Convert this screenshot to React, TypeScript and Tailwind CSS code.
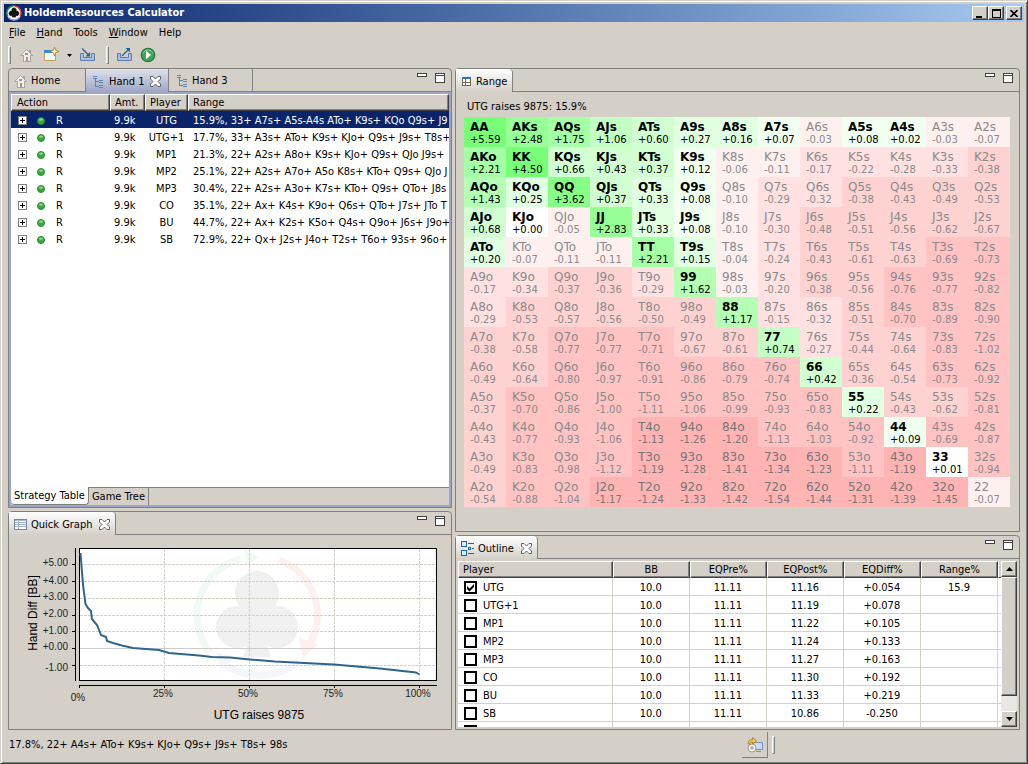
import { useState, type FC, type ReactNode } from 'react';
import clsx from 'clsx';

const RANKS = 'AKQJT98765432';

// Hand diffs in BB, row by row (suited above the diagonal, offsuit below).
const DIFFS: number[][] = [
  [5.59, 2.48, 1.75, 1.06, 0.6, 0.27, 0.16, 0.07, -0.03, 0.08, 0.02, -0.03, -0.07],
  [2.21, 4.5, 0.66, 0.43, 0.37, 0.12, -0.06, -0.11, -0.17, -0.22, -0.28, -0.33, -0.38],
  [1.43, 0.25, 3.62, 0.37, 0.33, 0.08, -0.1, -0.29, -0.32, -0.38, -0.43, -0.49, -0.53],
  [0.68, 0, -0.05, 2.83, 0.33, 0.08, -0.1, -0.3, -0.48, -0.51, -0.56, -0.62, -0.67],
  [0.2, -0.07, -0.11, -0.11, 2.21, 0.15, -0.04, -0.24, -0.43, -0.61, -0.63, -0.69, -0.73],
  [-0.17, -0.34, -0.37, -0.36, -0.29, 1.62, -0.03, -0.2, -0.38, -0.56, -0.76, -0.77, -0.82],
  [-0.29, -0.53, -0.57, -0.56, -0.5, -0.49, 1.17, -0.15, -0.32, -0.51, -0.7, -0.89, -0.9],
  [-0.38, -0.58, -0.77, -0.77, -0.71, -0.67, -0.61, 0.74, -0.27, -0.44, -0.64, -0.83, -1.02],
  [-0.49, -0.64, -0.8, -0.97, -0.91, -0.86, -0.79, -0.74, 0.42, -0.36, -0.54, -0.73, -0.92],
  [-0.37, -0.7, -0.86, -1.0, -1.11, -1.06, -0.99, -0.93, -0.83, 0.22, -0.43, -0.62, -0.81],
  [-0.43, -0.77, -0.93, -1.06, -1.134, -1.26, -1.2, -1.13, -1.03, -0.92, 0.09, -0.69, -0.87],
  [-0.49, -0.83, -0.98, -1.12, -1.19, -1.28, -1.41, -1.34, -1.23, -1.11, -1.19, 0.01, -0.94],
  [-0.54, -0.88, -1.04, -1.17, -1.24, -1.33, -1.42, -1.54, -1.44, -1.31, -1.39, -1.45, -0.07],
];

const LEVELS = [0.015, 0.14, 0.35, 0.685, 1.132, 1.7, 2.3, 3.2, 4.2];
const GREENS = [
  'bg-white',
  'bg-[#f0fff0]',
  'bg-[#e1ffe1]',
  'bg-[#d2ffd2]',
  'bg-[#c3ffc3]',
  'bg-[#b4ffb4]',
  'bg-[#a5ffa5]',
  'bg-[#96ff96]',
  'bg-[#87ff87]',
  'bg-[#78ff78]',
];
const REDS = ['bg-white', 'bg-[#fff0f0]', 'bg-[#ffe1e1]', 'bg-[#ffd2d2]', 'bg-[#ffc3c3]', 'bg-[#ffb4b4]'];

const level = (v: number) => LEVELS.filter((l) => Math.abs(v) >= l).length;

const handName = (r: number, c: number) => {
  if (r === c) return RANKS[r] + RANKS[r];
  return r < c ? `${RANKS[r]}${RANKS[c]}s` : `${RANKS[c]}${RANKS[r]}o`;
};

const STRATEGY = [
  ['UTG', '15.9%, 33+ A7s+ A5s-A4s ATo+ K9s+ KQo Q9s+ J9'],
  ['UTG+1', '17.7%, 33+ A3s+ ATo+ K9s+ KJo+ Q9s+ J9s+ T8s+'],
  ['MP1', '21.3%, 22+ A2s+ A8o+ K9s+ KJo+ Q9s+ QJo J9s+'],
  ['MP2', '25.1%, 22+ A2s+ A7o+ A5o K8s+ KTo+ Q9s+ QJo J'],
  ['MP3', '30.4%, 22+ A2s+ A3o+ K7s+ KTo+ Q9s+ QTo+ J8s'],
  ['CO', '35.1%, 22+ Ax+ K4s+ K9o+ Q6s+ QTo+ J7s+ JTo T'],
  ['BU', '44.7%, 22+ Ax+ K2s+ K5o+ Q4s+ Q9o+ J6s+ J9o+'],
  ['SB', '72.9%, 22+ Qx+ J2s+ J4o+ T2s+ T6o+ 93s+ 96o+'],
];

const OUTLINE = [
  ['UTG', '10.0', '11.11', '11.16', '+0.054', '15.9'],
  ['UTG+1', '10.0', '11.11', '11.19', '+0.078', ''],
  ['MP1', '10.0', '11.11', '11.22', '+0.105', ''],
  ['MP2', '10.0', '11.11', '11.24', '+0.133', ''],
  ['MP3', '10.0', '11.11', '11.27', '+0.163', ''],
  ['CO', '10.0', '11.11', '11.30', '+0.192', ''],
  ['BU', '10.0', '11.11', '11.33', '+0.219', ''],
  ['SB', '10.0', '11.11', '10.86', '-0.250', ''],
  ['', '', '', '', '', ''],
];

const RAISED =
  'border border-white border-r-[#404040] border-b-[#404040] bg-[#d4d0c8] shadow-[inset_-1px_-1px_0_#808080]';
const HEAD_CELL =
  'border-l border-t border-b border-r border-l-white border-t-white border-b-[#404040] border-r-[#404040] bg-[#d4d0c8] p-0 pt-px font-normal shadow-[inset_-1px_-1px_0_#808080]';

/* ---------- icons ---------- */

const CLUB = 'M8 3a2.2 2.2 0 0 1 1.9 3.3A2.3 2.3 0 1 1 8.7 9.6L9.6 12H6.4l.9-2.4A2.3 2.3 0 1 1 6.1 6.3 2.2 2.2 0 0 1 8 3z';

const AppIcon = () => (
  <svg width="16" height="16" viewBox="0 0 16 16">
    <circle cx="8" cy="8" r="7.3" fill="#fff" />
    <path d="M2 11.5A7 7 0 0 1 7.5 1" fill="none" stroke="#1d9a55" strokeWidth="1.4" />
    <path d="M8.5 1A7 7 0 0 1 14 11.5" fill="none" stroke="#e03030" strokeWidth="1.4" />
    <path d="M2.5 12.5a7 7 0 0 0 11 0" fill="none" stroke="#8c9be0" strokeWidth="1.4" />
    <path d={CLUB} fill="#111" stroke="#111" strokeWidth=".8" />
  </svg>
);

const HomeIcon = () => (
  <svg width="16" height="16" viewBox="0 0 16 16" shapeRendering="crispEdges">
    <path d="M2 8l5.500-5.500L13 8h-2v6H4V8z" fill="#efeeeb" stroke="#aaa7a0" />
    <path d="M10 3h1.500v3L10 4.500z" fill="#aaa7a0" />
    <path d="M6 6h3v2H6zM6.500 10h2v4h-2z" fill="#99958f" />
  </svg>
);

const NewWindowIcon = () => (
  <svg width="16" height="16" viewBox="0 0 16 16">
    <path d="M1.500 3.500h11v10h-11z" fill="#eef6ff" stroke="#c0a050" />
    <path d="M1 3h9v3H1z" fill="#3b86d8" />
    <path d="M11.500 0l1.300 3.200L16 4.500l-3.200 1.300L11.500 9l-1.300-3.200L7 4.500l3.200-1.300z" fill="#f3cf52" stroke="#a8821c" strokeWidth=".7" />
    <path d="M11.500 2.500v4M9.500 4.500h4" stroke="#fff8d8" />
  </svg>
);

const TrayIcon: FC<{ out?: boolean }> = ({ out }) => (
  <svg width="17" height="16" viewBox="0 0 17 16">
    <path d="M1.500 6.500v7h14v-7h-3v4h-8v-4z" fill="#a9bfe0" stroke="#5c7eb5" />
    {out ? (
      <g stroke="#1f6391" fill="#1f6391">
        <path d="M6 9l6-6" strokeWidth="1.200" />
        <path d="M14 1v4.500L9.500 1z" stroke="none" />
      </g>
    ) : (
      <g stroke="#1f6391" fill="#1f6391">
        <path d="M3 1.500l6 6" strokeWidth="1.200" />
        <path d="M11 9.500V5L6.500 9.500z" stroke="none" />
      </g>
    )}
  </svg>
);

const RunIcon = () => (
  <svg width="16" height="16" viewBox="0 0 16 16">
    <circle cx="8" cy="8" r="6.700" fill="#3fa558" stroke="#1e7d3c" strokeWidth="1.200" />
    <path d="M3 6a5.500 5.500 0 0 1 10 0" fill="none" stroke="#8fd19b" />
    <path d="M6 3.800L11 8l-5 4.200z" fill="#fff" />
  </svg>
);

const TreeIcon = () => (
  <svg width="11" height="14" viewBox="0 0 11 14" shapeRendering="crispEdges" fill="none" stroke="#5f86b8">
    <path d="M0 1.500h4M0 3.500h4M2.500 4v8M3 6.500h3M3 11.500h3" />
    <path d="M6 5.500h4M6 7.500h4M6 10.500h4M6 12.500h4" />
  </svg>
);

const CloseIcon = () => (
  <svg width="11" height="11" viewBox="0 0 11 11">
    <path
      d="M.5.500h2.500L5.500 3 8 .500h2.500V3L8 5.500 10.500 8v2.500H8L5.500 8 3 10.500H.500V8L3 5.500.500 3z"
      fill="#fff"
      stroke="#505050"
      strokeWidth=".9"
    />
  </svg>
);

const TableIcon = () => (
  <svg width="13" height="11" viewBox="0 0 13 11" shapeRendering="crispEdges">
    <path d="M.5.500h12v10H.5z" fill="#fff" stroke="#7487a8" />
    <path d="M1 1h11v1H1z" fill="#a9bde0" />
    <path d="M1 3.500h11M1 5.500h11M1 7.500h11M4.500 2v8" stroke="#a0b0c8" />
  </svg>
);

const RangeIcon = () => (
  <svg width="11" height="9" viewBox="0 0 11 9" shapeRendering="crispEdges">
    <path d="M1.500.500h8v8h-8z" fill="#fff" stroke="#6a6a4e" />
    <path d="M1 0h9v2H1z" fill="#2c73b8" />
    <path d="M4.500 2v6M2 5.500h7" stroke="#6a6a4e" />
  </svg>
);

const OutlineIcon = () => (
  <svg width="13" height="15" viewBox="0 0 13 15" shapeRendering="crispEdges" fill="#d8eefc" stroke="#1a67a8">
    <path d="M.5.500h5v5h-5zM.5 9.500h5v5h-5z" />
    <path d="M7.500 6.500h2v2h-2z" />
    <path d="M7 2.500h6M7 12.500h6M11 7.500h2" />
  </svg>
);

const SyncIcon = () => (
  <svg width="16" height="16" viewBox="0 0 16 16">
    <path d="M6.500 5.500h9v7h-9z" fill="#c9dbf5" stroke="#7490c0" />
    <path d="M9 14.500h5" stroke="#7490c0" />
    <circle cx="5" cy="11" r="4" fill="#f4f4ec" stroke="#a89a70" />
    <circle cx="5" cy="11" r="1.200" fill="#fff" stroke="#7490c0" />
    <path d="M1 7c0-3 1.500-4.500 4.500-4.500V.500L9.500 4 5.500 7V5C3.500 5 3 5.500 3 7z" fill="#f6c648" stroke="#a8761c" strokeWidth=".8" />
  </svg>
);

const MinMax = () => (
  <div className="ml-auto flex items-start gap-2 pt-1 pr-[6px]">
    <button type="button" aria-label="Minimize view" className="flex">
      <svg width="10" height="10" viewBox="0 0 10 10" shapeRendering="crispEdges">
        <path d="M.5.500h9v3h-9z" fill="#fff" stroke="#404040" />
      </svg>
    </button>
    <button type="button" aria-label="Maximize view" className="flex">
      <svg width="10" height="10" viewBox="0 0 10 10" shapeRendering="crispEdges">
        <path d="M.5.500h9v9h-9zM.5 2.500h9" fill="#fff" stroke="#404040" />
      </svg>
    </button>
  </div>
);

/* ---------- building blocks ---------- */

const ViewTab: FC<{ icon: ReactNode; title: string; closable?: boolean }> = ({ icon, title, closable }) => (
  <div className="-mb-px flex items-center gap-1 rounded-tr-sm border-r border-[#808080] bg-linear-to-b from-white to-[#d4d0c8] pt-[2px] pr-[5px] pl-[5px] whitespace-nowrap">
    {icon}
    <span>{title}</span>
    {closable && (
      <button type="button" aria-label={`Close ${title}`} className="ml-[3px]">
        <CloseIcon />
      </button>
    )}
  </div>
);

const Grip = () => <span className="h-[18px] w-[3px] border border-white border-r-[#808080] border-b-[#808080]" />;

const StrategyTable = () => {
  const [selected, setSelected] = useState(0);

  return (
    <div className="min-h-0 flex-1 overflow-hidden bg-white">
      <table className="w-full table-fixed border-separate border-spacing-0">
        <colgroup>
          <col className="w-[99px]" />
          <col className="w-[35px]" />
          <col className="w-[43px]" />
          <col />
        </colgroup>
        <thead>
          <tr className="h-[17px] text-left">
            <th className={clsx(HEAD_CELL, 'pl-[5px]')}>Action</th>
            <th className={clsx(HEAD_CELL, 'pl-1')}>Amt.</th>
            <th className={clsx(HEAD_CELL, 'pl-1')}>Player</th>
            <th className={clsx(HEAD_CELL, 'pl-1')}>Range</th>
          </tr>
        </thead>
        <tbody>
          {STRATEGY.map(([player, range], i) => (
            <tr
              key={player}
              onClick={() => setSelected(i)}
              className={clsx('h-[17px] whitespace-nowrap', i === selected && 'bg-[#0a246a] text-white')}
            >
              <td className="p-0 pt-[2px]">
                <div className="flex items-center pl-[7px]">
                  <button type="button" aria-label={`Expand ${player}`}>
                    <svg width="9" height="9" viewBox="0 0 9 9" shapeRendering="crispEdges">
                      <path d="M.5.500h8v8h-8z" fill="#fff" stroke="#808080" />
                      <path d="M2 4.500h5M4.500 2v5" stroke="#000" />
                    </svg>
                  </button>
                  <svg width="8" height="8" viewBox="0 0 8 8" className="ml-[10px]">
                    <circle cx="4" cy="4" r="3.500" fill="#37ab3c" stroke="#2a8a34" />
                    <ellipse cx="4" cy="2.600" rx="2" ry="1.200" fill="#8bdc84" />
                  </svg>
                  <span className="ml-[11px]">R</span>
                </div>
              </td>
              <td className="p-0 pt-[2px] pl-1">9.9k</td>
              <td className="p-0 pt-[2px] text-center">{player}</td>
              <td className="overflow-hidden p-0 pt-[2px] pl-[5px]">{range}</td>
            </tr>
          ))}
        </tbody>
      </table>
    </div>
  );
};

// label, grid line y, text baseline y
const Y_TICKS = [
  ['+5.00', 29, 31],
  ['+4.00', 46, 49],
  ['+3.00', 63, 65],
  ['+2.00', 80, 82],
  ['+1.00', 96, 99],
  ['+0.00', 113, 115],
  ['-1.00', 130, 136],
] as const;
const X_TICKS = [
  ['0%', 70],
  ['25%', 155],
  ['50%', 240],
  ['75%', 325],
  ['100%', 410],
] as const;

const QuickGraph = () => (
  <svg viewBox="0 0 442 194" className="h-[194px] w-full font-['Liberation_Sans',sans-serif]">
    <rect x="70.500" y="13.500" width="357" height="132" fill="#fff" stroke="#000" />

    {/* faded logo behind the curve */}
    <g fill="none" strokeWidth="7">
      <path d="M201 117A58 58 0 0 1 232 24" stroke="#f1f9f4" />
      <path d="M270 25A59 59 0 0 1 302 107" stroke="#fdf0ee" />
      <path d="M211 126A62 62 0 0 0 290 126" stroke="#f5f6fc" />
    </g>
    <path d="M235 14l16 8-14 9z" fill="#f1f9f4" />
    <path d="M290 103l19 6-15 14z" fill="#fdf0ee" />
    <path d="M207 117l18 6-14 12z" fill="#f5f6fc" />
    <g fill="#f0f0f0">
      <circle cx="248" cy="58" r="22" />
      <circle cx="228" cy="92" r="21" />
      <circle cx="268" cy="92" r="21" />
      <path d="M243 75h10v20l9 27h-28l9-27z" />
    </g>

    {Y_TICKS.map(([label, y, base]) => (
      <g key={label}>
        <path
          d={`M71 ${y + 0.5}H427`}
          stroke={label === '+0.00' ? '#ccc' : '#d4d0c8'}
          strokeDasharray={label === '+0.00' ? undefined : '3 1'}
        />
        <path d={`M63 ${y + 0.5}h3`} stroke="#000" />
        <text x="59" y={base} textAnchor="end" fontSize="10" fill="#222">
          {label}
        </text>
      </g>
    ))}
    {X_TICKS.map(([label, x], i) => (
      <g key={label}>
        {i > 0 && <path d={`M${x + 0.5} 14V145`} stroke="#d4d0c8" strokeDasharray="3 1" />}
        <path d={`M${x + 0.5} 150v3`} stroke="#000" />
        <text x={x - 1} y={i === 0 ? 166 : 162} textAnchor="middle" fontSize="10" fill="#222">
          {label}
        </text>
      </g>
    ))}
    <path d="M66.500 13v133M70 150.500h358" stroke="#000" />

    <path
      d="M71.500 18 74 50 76.500 69 79 73 82 76 83 84 88 90 92 100 97 102 98 106 104 108 113 110.500 124 113 150 115 160 118 190 120.500 203 122 221 122.500 241 124.500 266 126.500 325 129.500 371 133.500 407 137.500 410.500 139.500"
      fill="none"
      stroke="#2f6690"
      strokeWidth="2"
    />

    <text x="250" y="184" textAnchor="middle" fontSize="12">
      UTG raises 9875
    </text>
    <text transform="translate(28 78) rotate(-90)" textAnchor="middle" fontSize="12">
      Hand Diff [BB]
    </text>
  </svg>
);

const RangeMatrix = () => (
  <table className="w-full table-fixed border-collapse font-['DejaVu_Sans',sans-serif]">
    <tbody>
      {DIFFS.map((row, r) => (
        <tr key={RANKS[r]} className="h-[30px]">
          {row.map((v, c) => {
            const n = level(v);
            return (
              <td
                key={RANKS[c]}
                className={clsx(
                  'p-0 pt-[2px] pl-[6px]',
                  v < 0 ? REDS[Math.min(n, 5)] : GREENS[n],
                  v >= 0 ? 'text-black' : n >= 5 ? 'text-[#767676]' : 'text-[#8a8a8a]',
                )}
              >
                <div className={clsx('text-[12px] leading-[14px]', v >= 0 && 'font-bold')}>{handName(r, c)}</div>
                <div className="text-[10px] leading-[12px]">
                  {v < 0 ? '' : '+'}
                  {v.toFixed(2)}
                </div>
              </td>
            );
          })}
        </tr>
      ))}
    </tbody>
  </table>
);

const OutlineTable = () => {
  const [checked, setChecked] = useState(0);

  return (
    <div className="flex min-h-0 flex-1 overflow-hidden bg-white">
      <div className="min-h-0 flex-1 overflow-hidden">
        <table className="w-full table-fixed border-separate border-spacing-0">
          <colgroup>
            <col className="w-[28.5%]" />
            <col />
            <col />
            <col />
            <col />
            <col />
            <col className="w-[3px]" />
          </colgroup>
          <thead>
            <tr className="h-[17px]">
              <th className={clsx(HEAD_CELL, 'pl-1 text-left')}>Player</th>
              {['BB', 'EQPre%', 'EQPost%', 'EQDiff%', 'Range%'].map((h) => (
                <th key={h} className={HEAD_CELL}>
                  {h}
                </th>
              ))}
              <td className="border-b border-l border-b-[#404040] border-l-white bg-[#d4d0c8] p-0" />
            </tr>
          </thead>
          <tbody>
            {OUTLINE.map((row, i) => (
              <tr key={i} className="h-[18px]">
                {row.map((cell, c) => (
                  <td
                    key={c}
                    className={clsx(
                      'border-r border-b border-[#d4d0c8] p-0 pt-[2px]',
                      c > 0 ? 'text-center' : 'pl-[6px]',
                    )}
                  >
                    {c > 0 ? (
                      cell
                    ) : (
                      <label className="flex items-center gap-[6px]">
                        <span className="grid">
                          <input
                            type="checkbox"
                            aria-label={cell || 'Player'}
                            checked={i === checked}
                            onChange={() => setChecked(i)}
                            className="col-start-1 row-start-1 h-[13px] w-[13px] appearance-none border-2 border-black bg-white"
                          />
                          {i === checked && (
                            <svg
                              width="13"
                              height="13"
                              viewBox="0 0 13 13"
                              className="pointer-events-none col-start-1 row-start-1"
                            >
                              <path d="M3 5v3l2.500 2.500L10 6V3L5.500 7.500z" fill="#000" />
                            </svg>
                          )}
                        </span>
                        {cell}
                      </label>
                    )}
                  </td>
                ))}
                <td className="border-b border-[#d4d0c8] p-0" />
              </tr>
            ))}
          </tbody>
        </table>
      </div>

      {/* scrollbar */}
      <div className="flex w-4 flex-col bg-[#eae8e4]">
        <button type="button" aria-label="Scroll up" className={clsx(RAISED, 'flex h-4 items-center justify-center')}>
          <svg width="7" height="4" viewBox="0 0 7 4">
            <path d="M0 4L3.500 0 7 4z" />
          </svg>
        </button>
        <div className={clsx(RAISED, 'flex-[8]')} />
        <div className="flex-1" />
        <button type="button" aria-label="Scroll down" className={clsx(RAISED, 'flex h-4 items-center justify-center')}>
          <svg width="7" height="4" viewBox="0 0 7 4">
            <path d="M0 0L3.500 4 7 0z" />
          </svg>
        </button>
      </div>
    </div>
  );
};

const PANEL = 'flex min-h-0 flex-col rounded-t-sm border border-[#808080]';
const PANEL_HEAD = 'flex h-[23px] shrink-0 border-b border-[#808080]';

const App: FC = () => (
  <div className="flex h-screen flex-col border border-[#d4d0c8] border-r-[#404040] border-b-[#404040] bg-[#d4d0c8] p-[3px] font-['DejaVu_Sans_Condensed','DejaVu_Sans',sans-serif] text-[11px] leading-[14px] text-black shadow-[inset_1px_1px_0_#fff,inset_-1px_-1px_0_#808080]">
    {/* title bar */}
    <header className="flex h-[18px] shrink-0 items-center gap-[2px] bg-linear-to-r from-[#0a246a] to-[#a6caf0] px-[2px] text-white">
      <AppIcon />
      <h1 className="font-bold">HoldemResources Calculator</h1>
      <div className="ml-auto flex">
        <button type="button" aria-label="Minimize" className={clsx(RAISED, 'flex h-[14px] w-4 items-center justify-center')}>
          <svg width="10" height="9" viewBox="0 0 10 9">
            <path d="M1 7h6v2H1z" />
          </svg>
        </button>
        <button type="button" aria-label="Maximize" className={clsx(RAISED, 'flex h-[14px] w-4 items-center justify-center')}>
          <svg width="9" height="9" viewBox="0 0 9 9" shapeRendering="crispEdges">
            <path d="M.5 1h8v7.500h-8z" fill="none" stroke="#000" />
            <path d="M0 0h9v2H0z" />
          </svg>
        </button>
        <button type="button" aria-label="Close" className={clsx(RAISED, 'ml-[2px] flex h-[14px] w-4 items-center justify-center')}>
          <svg width="8" height="7" viewBox="0 0 8 7">
            <path d="M.5 0l7 7M7.500 0l-7 7" stroke="#000" strokeWidth="1.600" />
          </svg>
        </button>
      </div>
    </header>

    {/* menu */}
    <nav className="flex h-5 shrink-0 items-center gap-[11px] px-[5px] pt-[2px]">
      <button type="button"><u>F</u>ile</button>
      <button type="button"><u>H</u>and</button>
      <button type="button">Tools</button>
      <button type="button"><u>W</u>indow</button>
      <button type="button">Help</button>
    </nav>

    {/* toolbar */}
    <div className="flex h-[26px] shrink-0 items-center px-1">
      <Grip />
      <button type="button" aria-label="Home" className="ml-2"><HomeIcon /></button>
      <button type="button" aria-label="New hand" className="ml-2"><NewWindowIcon /></button>
      <button type="button" aria-label="More" className="ml-2">
        <svg width="5" height="3" viewBox="0 0 5 3"><path d="M0 0h5L2.500 3z" /></svg>
      </button>
      <button type="button" aria-label="Import" className="ml-[7px]"><TrayIcon /></button>
      <span className="ml-[10px] flex"><Grip /></span>
      <button type="button" aria-label="Export" className="ml-[7px]"><TrayIcon out /></button>
      <button type="button" aria-label="Run" className="ml-[7px]"><RunIcon /></button>
    </div>

    <main className="grid min-h-0 flex-1 grid-cols-[44fr_56fr] gap-[3px] px-1">
      <div className="flex min-h-0 min-w-0 flex-col gap-[3px]">
        <section className={clsx(PANEL, 'flex-1')}>
          <div className="flex h-[23px] shrink-0 whitespace-nowrap">
            <button type="button" className="flex w-[77px] items-center gap-[2px] border-r border-b border-[#808080] pt-[2px] pl-1">
              <HomeIcon />
              Home
            </button>
            <div className="flex w-[83px] items-center gap-[5px] border-r border-[#808080] bg-linear-to-b from-[#dfe2ea] to-[#9ea6c6] pt-[2px] pl-[7px]">
              <TreeIcon />
              <span>Hand 1</span>
              <button type="button" aria-label="Close Hand 1"><CloseIcon /></button>
            </div>
            <button type="button" className="flex w-[84px] items-center gap-1 border-r border-b border-[#808080] pt-[2px] pl-2">
              <TreeIcon />
              Hand 3
            </button>
            <div className="flex flex-1 border-b border-[#808080]">
              <MinMax />
            </div>
          </div>
          <div className="flex min-h-0 flex-1 flex-col border-2 border-[#9ea6c6] bg-[#d4d0c8]">
            <StrategyTable />
            <div className="flex h-[18px] shrink-0">
              <button type="button" className="rounded-b-sm border-r border-b border-[#808080] bg-white px-[3px]">
                Strategy Table
              </button>
              <button type="button" className="border-t border-r border-[#808080] px-[3px]">
                Game Tree
              </button>
              <div className="flex-1 border-t border-[#808080]" />
            </div>
          </div>
        </section>

        <section className={clsx(PANEL, 'shrink-0')}>
          <div className={PANEL_HEAD}>
            <ViewTab icon={<TableIcon />} title="Quick Graph" closable />
            <MinMax />
          </div>
          <QuickGraph />
        </section>
      </div>

      <div className="flex min-h-0 min-w-0 flex-col gap-[3px]">
        <section className={clsx(PANEL, 'shrink-0')}>
          <div className={PANEL_HEAD}>
            <ViewTab icon={<RangeIcon />} title="Range" />
            <MinMax />
          </div>
          <div className="pr-[9px] pb-6 pl-2">
            <p className="flex h-[25px] items-center pt-1 pl-[3px]">UTG raises 9875: 15.9%</p>
            <RangeMatrix />
          </div>
        </section>

        <section className={clsx(PANEL, 'flex-1')}>
          <div className={PANEL_HEAD}>
            <ViewTab icon={<OutlineIcon />} title="Outline" closable />
            <MinMax />
          </div>
          <div className="flex min-h-0 flex-1 flex-col p-[2px]">
            <OutlineTable />
          </div>
        </section>
      </div>
    </main>

    <footer className="grid h-[30px] shrink-0 grid-cols-[44fr_56fr] items-center gap-[3px] px-1">
      <p className="pl-px">17.8%, 22+ A4s+ ATo+ K9s+ KJo+ Q9s+ J9s+ T8s+ 98s</p>
      <div className="flex items-center justify-end pr-[245px]">
        <button
          type="button"
          aria-label="Updates"
          className="flex h-[26px] w-[26px] items-center justify-center border-r border-b border-[#808080]"
        >
          <SyncIcon />
        </button>
        <span className="ml-1 flex">
          <Grip />
        </span>
      </div>
    </footer>
  </div>
);

export default App;
